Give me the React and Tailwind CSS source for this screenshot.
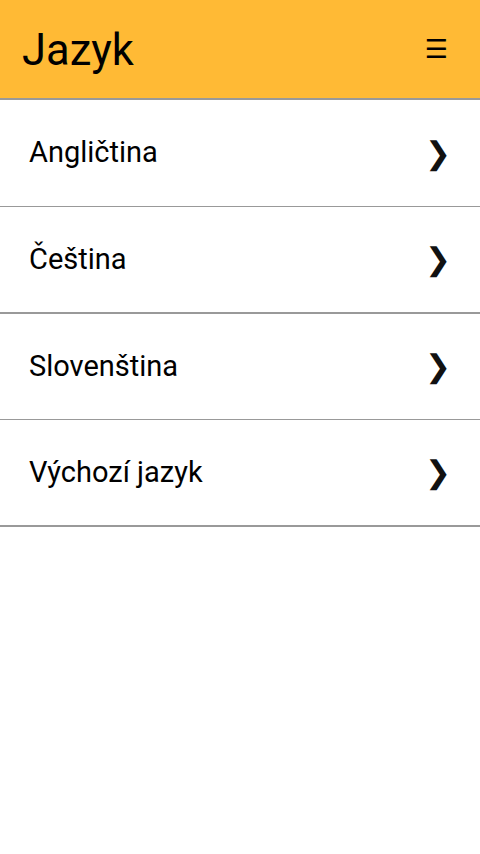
export default function App() {
  const items = [
    { label: 'Angličtina', cls: 'h-[107px] border-b' },
    { label: 'Čeština', cls: 'h-[107px] border-b-2' },
    { label: 'Slovenština', cls: 'h-[106px] border-b' },
    { label: 'Výchozí jazyk', cls: 'h-[107px] border-b-2' },
  ];

  return (
    <div className="w-[480px] min-h-[854px] bg-white" style={{ fontFamily: 'Roboto, "DejaVu Sans", sans-serif' }}>
      <header className="h-[100px] bg-[#ffba35] border-b-2 border-[#999999] flex items-center justify-between pl-[22px] pr-[32px]">
        <h1 className="text-[43.5px] leading-none text-black pt-[4px]">Jazyk</h1>
        <span className="text-[26px] leading-none text-black" style={{ fontFamily: '"DejaVu Sans", sans-serif' }}>☰</span>
      </header>
      <ul>
        {items.map((item) => (
          <li
            key={item.label}
            className={`flex items-center justify-between pl-[29px] pr-[29px] border-[#999999] ${item.cls}`}
          >
            <span className="text-[29px] text-black">{item.label}</span>
            <span className="text-[31px] leading-none text-[#111111]" style={{ fontFamily: '"DejaVu Sans", sans-serif' }}>❯</span>
          </li>
        ))}
      </ul>
    </div>
  );
}
